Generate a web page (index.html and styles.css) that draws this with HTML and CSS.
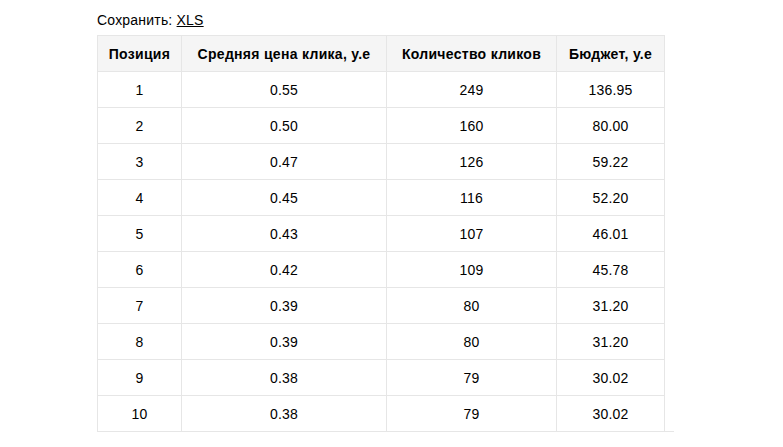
FILE: index.html
```html
<!DOCTYPE html>
<html lang="ru">
<head>
<meta charset="utf-8">
<link rel="stylesheet" href="styles.css">
</head>
<body>
<div class="page">
  <div class="save">Сохранить: <a href="#" class="save-link">XLS</a></div>
  <div class="table-wrap">
    <table class="grid">
      <colgroup>
        <col class="c1"><col class="c2"><col class="c3"><col class="c4">
      </colgroup>
      <thead>
        <tr><th>Позиция</th><th>Средняя цена клика, у.е</th><th>Количество кликов</th><th>Бюджет, у.е</th></tr>
      </thead>
      <tbody>
        <tr><td>1</td><td>0.55</td><td>249</td><td>136.95</td></tr>
        <tr><td>2</td><td>0.50</td><td>160</td><td>80.00</td></tr>
        <tr><td>3</td><td>0.47</td><td>126</td><td>59.22</td></tr>
        <tr><td>4</td><td>0.45</td><td>116</td><td>52.20</td></tr>
        <tr><td>5</td><td>0.43</td><td>107</td><td>46.01</td></tr>
        <tr><td>6</td><td>0.42</td><td>109</td><td>45.78</td></tr>
        <tr><td>7</td><td>0.39</td><td>80</td><td>31.20</td></tr>
        <tr><td>8</td><td>0.39</td><td>80</td><td>31.20</td></tr>
        <tr><td>9</td><td>0.38</td><td>79</td><td>30.02</td></tr>
        <tr><td>10</td><td>0.38</td><td>79</td><td>30.02</td></tr>
      </tbody>
    </table>
  </div>
</div>
</body>
</html>
```
FILE: styles.css
```css
html, body {
  margin: 0;
  padding: 0;
  background: #ffffff;
}
body {
  font-family: "Liberation Sans", Arial, sans-serif;
  font-size: 14px;
  color: #000;
}
.page {
  padding: 12px 0 0 97px;
}
.save {
  line-height: 17px;
  height: 23px;
  letter-spacing: 0.2px;
}
.save-link {
  color: #000;
  text-decoration: underline;
}
.table-wrap {
  width: 577px;
  border-bottom: 1px solid #e6e6e6;
}
.grid {
  border-collapse: collapse;
  table-layout: fixed;
  width: 567px;
}
.c1 { width: 84px; }
.c2 { width: 205px; }
.c3 { width: 170px; }
.c4 { width: 108px; }
.grid th, .grid td {
  border: 1px solid #e6e6e6;
  text-align: center;
  height: 35px;
  padding: 0;
  letter-spacing: 0.2px;
}
.grid th {
  background: #f5f5f5;
  font-weight: bold;
  letter-spacing: 0.3px;
}
.grid tbody tr:last-child td {
  border-bottom: none;
}
```
